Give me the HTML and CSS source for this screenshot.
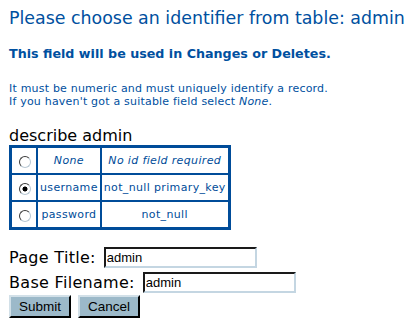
FILE: index.html
```html
<!DOCTYPE html>
<html>
<head>
<meta charset="utf-8">
<link rel="stylesheet" href="styles.css">
</head>
<body>
<h1 class="title">Please choose an identifier from table: admin</h1>
<h2 class="subtitle">This field will be used in Changes or Deletes.</h2>
<p class="note">It must be numeric and must uniquely identify a record.<br>If you haven't got a suitable field select <i>None</i>.</p>
<form class="form">
  <div class="caption">describe admin</div>
  <table class="fields">
    <tr>
      <td class="c-radio"><input type="radio" name="id" class="radio"></td>
      <td class="c-name"><i>None</i></td>
      <td class="c-flags"><i>No id field required</i></td>
    </tr>
    <tr>
      <td class="c-radio"><input type="radio" name="id" class="radio" checked></td>
      <td class="c-name">username</td>
      <td class="c-flags">not_null primary_key</td>
    </tr>
    <tr>
      <td class="c-radio"><input type="radio" name="id" class="radio"></td>
      <td class="c-name">password</td>
      <td class="c-flags">not_null</td>
    </tr>
  </table>
  <div class="row row-first"><label class="label">Page Title:</label><input class="text" type="text" value="admin"></div>
  <div class="row"><label class="label">Base Filename:</label><input class="text" type="text" value="admin"></div>
  <div class="buttons"><button type="button" class="btn">Submit</button><button type="button" class="btn">Cancel</button></div>
</form>
</body>
</html>
```
FILE: styles.css
```css
html, body {
  background: #ffffff;
}
body {
  margin: 0;
  padding: 6px 9px 0 9px;
  font-family: "DejaVu Sans", Verdana, sans-serif;
  color: #0050a0;
}
.title {
  font-size: 17.4px;
  font-weight: normal;
  line-height: 24px;
  margin: 0;
  white-space: nowrap;
}
.subtitle {
  font-size: 12.7px;
  font-weight: bold;
  line-height: 16px;
  margin: 16px 0 0 0;
  white-space: nowrap;
}
.note {
  font-size: 11px;
  line-height: 13px;
  letter-spacing: 0.2px;
  margin: 20px 0 0 0;
  white-space: nowrap;
}
.form {
  margin: 0;
}
.caption {
  color: #000000;
  font-size: 16px;
  line-height: 18px;
  margin-top: 19px;
}
.fields {
  border-collapse: collapse;
  border: 3px solid #004c99;
  font-size: 11px;
  letter-spacing: 0.35px;
  color: #004c99;
}
.fields td {
  border: 2px solid #004c99;
  height: 25px;
  padding: 0 2px;
  text-align: center;
  white-space: nowrap;
}
.fields .c-radio {
  width: 23px;
  padding: 0 0 0 1px;
}
.radio {
  appearance: none;
  -webkit-appearance: none;
  width: 12px;
  height: 12px;
  margin: 2px 0 0 0;
  border-radius: 50%;
  border: 1px solid #3a3a3a;
  border-right-color: #b8c8d4;
  border-bottom-color: #b8c8d4;
  background: #ffffff;
  vertical-align: middle;
}
.radio:checked {
  background: radial-gradient(circle, #000000 0 2.2px, #ffffff 2.8px);
}
.row {
  display: flex;
  align-items: center;
  margin-top: 4px;
  height: 21px;
}
.row-first {
  margin-top: 17px;
}
.label {
  color: #000000;
  font-size: 16px;
  letter-spacing: 0.3px;
  margin-right: 8px;
}
.text {
  box-sizing: border-box;
  width: 153px;
  height: 21px;
  margin: 0;
  padding: 0 1px;
  border: 2px solid;
  border-color: #1a1a1a #c4d6e2 #c4d6e2 #1a1a1a;
  font-family: "Liberation Sans", Arial, sans-serif;
  font-size: 13px;
  letter-spacing: 0;
  color: #000000;
  background: #ffffff;
}
.buttons {
  display: flex;
  gap: 7px;
  margin-top: 2px;
}
.btn {
  box-sizing: border-box;
  height: 23px;
  padding: 0 8px;
  margin: 0;
  background: #9cb9c9;
  border: 2px solid;
  border-color: #d2e0e8 #000000 #000000 #d2e0e8;
  font-family: "Liberation Sans", Arial, sans-serif;
  font-size: 13.5px;
  color: #000000;
}
```
